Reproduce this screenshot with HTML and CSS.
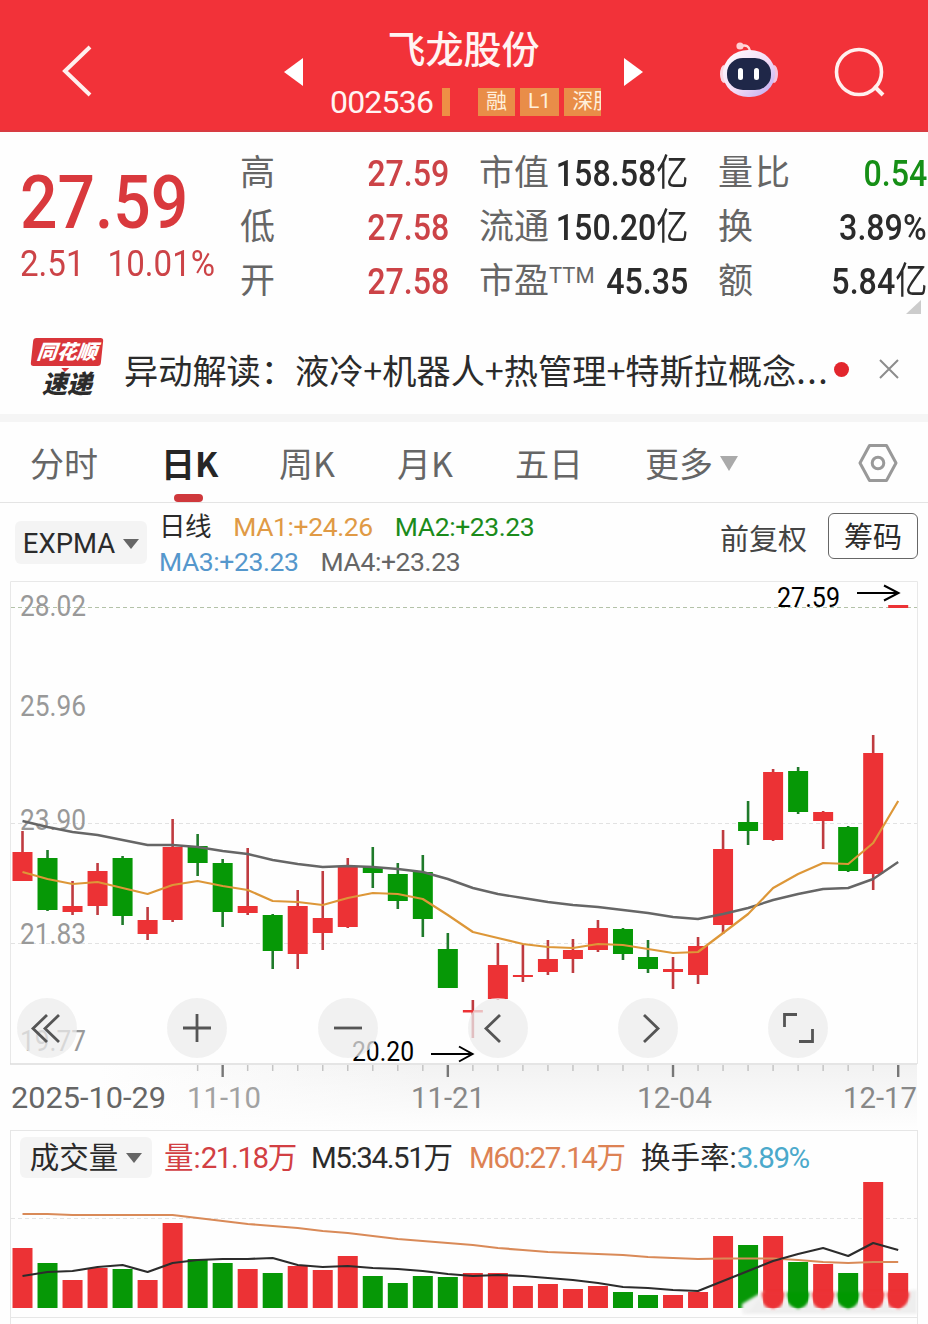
FILE: index.html
```html
<!DOCTYPE html>
<html lang="zh-CN">
  <head>
    <meta charset="UTF-8" />
    <meta name="viewport" content="width=device-width, initial-scale=1.0" />
    <title>飞龙股份 002536</title>
    <link rel="stylesheet" href="styles.css" />
  </head>
  <body>
    <header class="topbar">
      <svg class="back" width="34" height="54" viewBox="0 0 34 54">
        <path d="M30 3L5 27L30 51" fill="none" stroke="#fff0ee" stroke-width="4" />
      </svg>
      <svg class="prev" width="20" height="30" viewBox="0 0 20 30">
        <path d="M20 1V29L1 15Z" fill="#fff" />
      </svg>
      <div class="stock">
        <h1>飞龙股份</h1>
        <div class="stock-info">
          <span class="code">002536</span>
          <span class="tag-bar"></span>
          <div class="tags">
            <span class="tag">融</span>
            <span class="tag">L1</span>
            <span class="tag">深股</span>
          </div>
        </div>
      </div>
      <svg class="next" width="20" height="30" viewBox="0 0 20 30">
        <path d="M0 1V29L19 15Z" fill="#fff" />
      </svg>
      <svg class="robot" width="60" height="56" viewBox="0 0 60 56">
        <defs>
          <linearGradient id="shell" x1="0" y1="0" x2="1" y2="1">
            <stop offset="0" stop-color="#fff" />
            <stop offset="0.55" stop-color="#f3dcf6" />
            <stop offset="1" stop-color="#b9a6f2" />
          </linearGradient>
        </defs>
        <path d="M22 4Q30 2 31 9" fill="none" stroke="#ffd9dc" stroke-width="2.5" />
        <circle cx="21" cy="4" r="3.6" fill="#ffd0d4" />
        <ellipse cx="5" cy="32" rx="4" ry="9" fill="#fbd7e2" />
        <ellipse cx="55" cy="32" rx="4" ry="9" fill="#f6c4dd" />
        <rect x="4" y="8" width="52" height="47" rx="25" ry="23" fill="url(#shell)" />
        <rect x="8" y="16" width="44" height="32" rx="16" ry="15" fill="#1f2748" />
        <rect x="19" y="26" width="5" height="12" rx="2.5" fill="#fff" />
        <rect x="35" y="26" width="5" height="12" rx="2.5" fill="#fff" />
      </svg>
      <svg class="search" width="52" height="52" viewBox="0 0 52 52">
        <circle cx="25" cy="25" r="22.5" fill="none" stroke="#fff0ee" stroke-width="3.6" />
        <path d="M40 39L49 48" stroke="#fff0ee" stroke-width="4" />
      </svg>
    </header>

    <section class="quote">
      <div class="price">
        <div class="last">27.59</div>
        <div class="change"><span>2.51</span><span>10.01%</span></div>
      </div>
      <dl class="stats">
        <div><dt>高</dt><dd class="red">27.59</dd></div>
        <div><dt>市值</dt><dd>158.58<i>亿</i></dd></div>
        <div><dt class="wide">量比</dt><dd class="green">0.54</dd></div>
        <div><dt>低</dt><dd class="red">27.58</dd></div>
        <div><dt>流通</dt><dd>150.20<i>亿</i></dd></div>
        <div><dt>换</dt><dd>3.89%</dd></div>
        <div><dt>开</dt><dd class="red">27.58</dd></div>
        <div><dt>市盈<sup>TTM</sup></dt><dd>45.35</dd></div>
        <div><dt>额</dt><dd>5.84<i>亿</i></dd></div>
      </dl>
      <span class="corner"></span>
    </section>

    <section class="news">
      <div class="news-logo">
        <span class="logo-top">同花顺</span>
        <span class="logo-bottom">速递</span>
      </div>
      <p>异动解读：液冷+机器人+热管理+特斯拉概念<span class="dots">...</span></p>
      <span class="unread"></span>
      <svg class="close" width="22" height="22" viewBox="0 0 22 22">
        <path d="M2 2L20 20M20 2L2 20" stroke="#8c8c8c" stroke-width="2" />
      </svg>
    </section>

    <nav class="tabs">
      <a class="tab">分时</a>
      <a class="tab active">日K</a>
      <a class="tab">周K</a>
      <a class="tab">月K</a>
      <a class="tab">五日</a>
      <a class="tab more">更多<span class="caret light"></span></a>
      <svg class="settings" width="42" height="42" viewBox="0 0 42 42">
        <path d="M12.5 3.5H29.5L39 21L29.5 38.5H12.5L3 21Z" fill="none" stroke="#999" stroke-width="3" stroke-linejoin="round" />
        <circle cx="21" cy="21" r="5.8" fill="none" stroke="#999" stroke-width="3" />
      </svg>
    </nav>

    <section class="indicator">
      <button class="chip">EXPMA<span class="caret"></span></button>
      <div class="ma-list">
        <div><span class="period">日线</span><span class="ma1">MA1:+24.26</span><span class="ma2">MA2:+23.23</span></div>
        <div><span class="ma3">MA3:+23.23</span><span class="ma4">MA4:+23.23</span></div>
      </div>
      <span class="adjust">前复权</span>
      <button class="outline">筹码</button>
    </section>

    <section class="kline">
      <svg id="kline" width="928" height="549" viewBox="0 581 928 549"></svg>
      <div class="tools">
        <button><svg viewBox="0 0 60 60"><path d="M30 17L16 30.500L30 44M42 17L28 30.500L42 44" /></svg></button>
        <button><svg viewBox="0 0 60 60"><path d="M16 30H44M30 16V44" /></svg></button>
        <button><svg viewBox="0 0 60 60"><path d="M16 30H44" /></svg></button>
        <button><svg viewBox="0 0 60 60"><path d="M32 17L18 30.500L32 44" /></svg></button>
        <button><svg viewBox="0 0 60 60"><path d="M26 17L40 30.500L26 44" /></svg></button>
        <button><svg viewBox="0 0 60 60"><path d="M29 16.500H16.500V29M44.500 31V43.500H31" /></svg></button>
      </div>
    </section>

    <section class="volume">
      <div class="volume-head">
        <button class="chip">成交量<span class="caret"></span></button>
        <span class="vol">量:<b>21.18</b>万</span>
        <span class="m5"><b>M5:34.51</b>万</span>
        <span class="m60"><b>M60:27.14</b>万</span>
        <span class="rate">换手率:<b>3.89%</b></span>
      </div>
      <svg id="volume" width="928" height="144" viewBox="0 1180 928 144"></svg>
    </section>
    <script src="script.js"></script>
  </body>
</html>
```

FILE: styles.css
```css
* {
  box-sizing: border-box;
}

body {
  margin: 0;
  width: 928px;
  height: 1324px;
  overflow: hidden;
  background: #fefefe;
  color: #2b2b2b;
  font-family: Roboto, "Noto Sans CJK SC", sans-serif;
}

button {
  font: inherit;
  color: inherit;
  border: 0;
  padding: 0;
}

svg {
  display: block;
  flex: none;
}

/* header */
.topbar {
  height: 132px;
  background: #f23239;
  border-bottom: 2px solid #d83c42;
  display: flex;
  align-items: center;
  padding-left: 60px;
  padding-top: 12px;
}

.prev {
  margin-left: 189px;
  margin-top: 2px;
}

.stock {
  width: 271px;
  margin-left: 27px;
  margin-top: 9px;
  color: #fff4f2;
}

.stock h1 {
  margin: 0 4px 0 0;
  font-size: 38px;
  font-weight: 500;
  line-height: 52px;
  text-align: center;
}

.stock-info {
  display: flex;
  align-items: center;
  height: 51px;
}

.code {
  font-size: 32px;
  letter-spacing: -0.8px;
  width: 112px;
}

.tag-bar {
  width: 8px;
  height: 28px;
  background: #ee8f45;
}

.tags {
  display: flex;
  gap: 5px;
  width: 123px;
  margin-left: 28px;
  overflow: hidden;
}

.tag {
  flex: none;
  height: 28px;
  padding: 0 8px;
  line-height: 26px;
  font-size: 21px;
  background: #e98d48;
  color: #fff0dc;
}

.next {
  margin-left: 23px;
  margin-top: 2px;
}

.robot {
  margin-left: 75px;
  margin-top: -2px;
}

.search {
  margin-left: 55px;
  margin-top: 4px;
}

/* quote */
.quote {
  position: relative;
  display: flex;
  height: 203px;
  padding-top: 15px;
}

.price {
  width: 240px;
  padding-left: 20px;
  color: #d9393d;
}

.last {
  margin-top: 17px;
  font-size: 75px;
  font-weight: 500;
  line-height: 76px;
  transform: scaleX(0.88);
  transform-origin: left;
}

.change {
  display: flex;
  gap: 25px;
  font-size: 36px;
  line-height: 48px;
  color: #cc4347;
  transform: scaleX(0.92);
  transform-origin: left;
}

.stats {
  display: grid;
  grid-template-columns: 209px 209px 209px;
  grid-auto-rows: 54px;
  column-gap: 30px;
  margin: 0;
}

.stats div {
  display: flex;
  justify-content: space-between;
  line-height: 54px;
}

.stats dt {
  font-size: 35px;
  color: #666;
  white-space: nowrap;
}

.stats .wide {
  letter-spacing: 2px;
}

/* narrow digits, as in the quote board */
.stats dd {
  margin: 0 0 0 -24px;
  font-size: 37px;
  font-weight: 500;
  white-space: nowrap;
  transform: scaleX(0.87);
  transform-origin: right;
}

.stats i {
  font-style: normal;
  font-weight: 400;
  font-size: 37px;
}

.stats sup {
  font-size: 22px;
  line-height: 0;
  vertical-align: 10px;
}

.stats .red {
  color: #cc4347;
}

.stats .green {
  color: #168f16;
}

.corner {
  position: absolute;
  right: 7px;
  bottom: 21px;
  border-left: 15px solid transparent;
  border-bottom: 14px solid #ccc;
}

/* news */
.news {
  display: flex;
  align-items: center;
  height: 87px;
  padding: 0 0 11px 30px;
  border-bottom: 8px solid #f5f5f5;
}

.news-logo {
  width: 74px;
  height: 62px;
  margin-right: 20px;
  display: flex;
  flex-direction: column;
  align-items: center;
  font-style: italic;
  font-weight: 900;
}

.logo-top {
  position: relative;
  width: 70px;
  height: 30px;
  line-height: 28px;
  text-align: center;
  font-size: 20px;
  color: #fff;
  background: #d9353a;
  border-radius: 3px;
  transform: skewX(-6deg);
}

.logo-top::after {
  content: "";
  position: absolute;
  left: 31px;
  top: 30px;
  border: 4px solid transparent;
  border-top-color: #d9353a;
  border-bottom: 0;
}

.logo-bottom {
  margin-top: 3px;
  font-size: 25px;
  line-height: 32px;
}

.news p {
  margin: 0;
  width: 709px;
  font-family: "Noto Sans CJK SC", sans-serif;
  font-size: 34.2px;
  line-height: 50px;
  white-space: nowrap;
}

.dots {
  letter-spacing: 1.5px;
}

.unread {
  width: 15px;
  height: 15px;
  border-radius: 50%;
  background: #e2262d;
  margin-left: 1px;
}

.close {
  margin-left: 29px;
}

/* tabs */
.tabs {
  display: flex;
  height: 81px;
  padding-left: 30px;
  border-bottom: 1px solid #e4e4e4;
  font-family: "Noto Sans CJK SC", sans-serif;
  font-size: 34px;
  line-height: 82px;
  color: #666;
}

.tab {
  width: 118px;
  white-space: nowrap;
}

.tab:first-child {
  width: 131px;
}

.tab.active {
  position: relative;
  color: #262626;
  font-weight: 700;
}

.tab.active::after {
  content: "";
  position: absolute;
  left: 13px;
  bottom: 0;
  width: 29px;
  height: 8px;
  border-radius: 4px;
  background: #cf383c;
}

.tab:nth-child(5) {
  width: 130px;
}

.tab.more {
  width: 212px;
}

.settings {
  margin-top: 20px;
}

.caret {
  display: inline-block;
  border: 8px solid transparent;
  border-top: 10px solid #666;
  border-bottom: 0;
}

.caret.light {
  border-width: 15px 9px 0;
  border-top-color: #aaa;
  margin-left: 7px;
  vertical-align: 6px;
}

/* indicator row */
.indicator {
  display: flex;
  height: 78px;
  padding-left: 15px;
  align-items: flex-start;
}

.chip {
  display: flex;
  align-items: center;
  justify-content: center;
  gap: 8px;
  background: #f4f4f4;
  border-radius: 6px;
}

.indicator .chip {
  width: 132px;
  height: 43px;
  margin-top: 18px;
  padding-top: 2px;
  font-size: 27.5px;
}

.ma-list {
  width: 561px;
  margin: 6px 0 0 12px;
  font-size: 26.5px;
  line-height: 35px;
}

.ma-list span {
  margin-right: 22px;
  letter-spacing: -0.4px;
}

.ma1 {
  color: #e09a45;
}

.ma2 {
  color: #1b8b1b;
}

.ma3 {
  color: #5597cc;
}

.ma4 {
  color: #666;
}

.adjust {
  width: 108px;
  margin-top: 16px;
  font-size: 29px;
  line-height: 42px;
  color: #444;
}

.outline {
  width: 90px;
  height: 46px;
  margin-top: 10px;
  padding-top: 3px;
  font-size: 29px;
  line-height: 42px;
  background: none;
  border: 1px solid #666;
  border-radius: 6px;
}

/* charts */
.kline {
  position: relative;
  height: 549px;
}

.tools {
  position: absolute;
  left: 17px;
  top: 417px;
  display: flex;
  gap: 90.3px;
}

.tools button {
  width: 60px;
  height: 60px;
  border-radius: 50%;
  background: rgba(236, 236, 236, 0.75);
}

.tools path {
  fill: none;
  stroke: #555;
  stroke-width: 2.8;
}

.volume-head {
  display: flex;
  align-items: center;
  width: 908px;
  height: 50px;
  margin-left: 10px;
  padding: 6px 0 2px 9px;
  font-size: 29.5px;
  line-height: 40px;
  border: 1px solid #e6e6e6;
  border-bottom: 0;
}

.volume-head span {
  white-space: nowrap;
}

.volume-head b {
  font-weight: 400;
  letter-spacing: -1.4px;
}

.volume-head .chip {
  width: 132px;
  height: 41px;
}

.vol {
  width: 147px;
  margin-left: 12px;
  color: #d23f43;
}

.m5 {
  width: 158px;
}

.m60 {
  width: 172px;
  color: #dd8254;
}

.rate b {
  color: #4ba9cb;
}

.axis-label {
  font-size: 29px;
  fill: #999;
}

.date-label {
  font-size: 29px;
  fill: #888;
}

.mark {
  font-size: 28px;
  fill: #000;
}
```

FILE: script.js
```js
const RED = "#ec3235";
const GREEN = "#069806";
const STEP = 25.02;
const FIRST = 22.5;

// [direction, high, body top, body bottom, low]
const candles = [
  [1, 831, 852, 881, 881], [0, 850, 858, 910, 911], [1, 881, 906, 912, 915],
  [1, 863, 871, 906, 915], [0, 856, 858, 916, 925], [1, 907, 920, 934, 940],
  [1, 819, 847, 920, 922], [0, 834, 846, 863, 876], [0, 859, 863, 912, 927],
  [1, 848, 906, 913, 915], [0, 914, 915, 951, 969], [1, 890, 906, 954, 969],
  [1, 871, 918, 933, 950], [1, 858, 866, 927, 928], [0, 847, 867, 873, 888],
  [0, 863, 874, 901, 909], [0, 855, 872, 919, 937], [0, 933, 949, 988, 988],
  [1, 1000, 1010, 1012.5, 1038], [1, 943, 965, 999, 1000], [1, 945, 975, 977, 982],
  [1, 940, 959, 972, 975], [1, 939, 950, 959, 973], [1, 920, 928, 950, 952],
  [0, 928, 929, 954, 960], [0, 940, 957, 969, 973], [1, 957, 969, 972, 989],
  [1, 937, 946, 975, 984], [1, 830, 849, 925, 934], [0, 801, 822, 831, 845],
  [1, 769, 772, 840, 841], [0, 767, 771, 812, 814], [1, 811, 812, 821, 849],
  [0, 826, 827, 871, 872], [1, 735, 753, 874, 890], [1, 605, 605, 608, 608],
];

const ma1 = [872, 879, 884, 882, 888, 894, 885, 881, 886, 890, 901, 902, 905, 898, 893, 894, 899, 915,
  932, 938, 944, 947, 948, 944, 945, 949, 953, 952, 933, 914, 888, 874, 863, 864, 843, 801];
const ma2 = [821, 827, 832, 835, 840, 845, 845, 847, 851, 854, 860, 864, 867, 866, 867, 869, 872, 879,
  888, 894, 898, 902, 905, 907, 910, 913, 917, 919, 914, 908, 900, 894, 889, 888, 879, 862];

const volumes = [1248, 1263, 1280, 1268, 1269, 1280, 1223, 1259, 1263, 1269, 1273, 1266, 1270, 1256, 1276, 1283,
  1276, 1277, 1273, 1273, 1286, 1284, 1289, 1286, 1292, 1295, 1295, 1292, 1236, 1245, 1236, 1262, 1264, 1273, 1182, 1273];
const m5 = [1276, 1272, 1271, 1267, 1265, 1272, 1263, 1260, 1259, 1259, 1258, 1265, 1267, 1266, 1268, 1269, 1271, 1274,
  1276, 1275, 1276, 1278, 1280, 1283, 1287, 1288, 1290, 1291, 1281, 1271, 1261, 1254, 1248, 1256, 1243, 1250];
const m60 = [1214, 1214, 1215, 1215, 1215, 1215, 1215, 1218, 1221, 1224, 1226, 1228, 1231, 1233, 1236, 1239, 1241, 1243,
  1245, 1248, 1250, 1252, 1253, 1254, 1255, 1257, 1258, 1259, 1258.5, 1258.5, 1258.5, 1260, 1262, 1263, 1262, 1262];

const cx = (i) => FIRST + i * STEP;

function line(points, color, width) {
  const pts = points.map((y, i) => `${cx(i).toFixed(1)},${y}`).join(" ");
  return `<polyline points="${pts}" fill="none" stroke="${color}" stroke-width="${width}" stroke-linejoin="round"/>`;
}

function grid(y, color = "#e2e2e2") {
  return `<path d="M11 ${y + 0.5}H917" stroke="${color}" stroke-dasharray="4 3" stroke-width="1"/>`;
}

function label(cls, x, y, width, text, extra = "") {
  return `<text class="${cls}" x="${x}" y="${y}" textLength="${width}" lengthAdjust="spacingAndGlyphs" ${extra}>${text}</text>`;
}

function drawKline() {
  let out = `<defs>
    <linearGradient id="fade" x1="0" y1="0" x2="0" y2="1">
      <stop offset="0" stop-color="#fefefe" stop-opacity="0"/><stop offset="1" stop-color="#fefefe"/></linearGradient>
    <linearGradient id="side" x1="0" y1="0" x2="1" y2="0">
      <stop offset="0" stop-color="#fefefe"/><stop offset="0.4" stop-color="#f2f2f2"/></linearGradient>
  </defs>`;
  out += `<rect x="100" y="1065" width="817" height="64" fill="url(#side)"/>`;
  out += `<rect x="100" y="1065" width="818" height="65" fill="url(#fade)"/>`;
  out += `<path d="M10.5 1064V581.5H917.5V1064" fill="none" stroke="#e8e8e8"/>`;
  out += `<path d="M10 1064H917" stroke="#dcdcdc" stroke-width="1.5"/>`;
  out += grid(607, "#b3c2a8") + grid(823) + grid(943);

  [["28.02", 616], ["25.96", 716], ["23.90", 830], ["21.83", 944], ["19.77", 1051]].forEach(([text, y]) => {
    out += label("axis-label", 20, y, 66, text);
  });

  candles.forEach(([up, high, top, bottom, low], i) => {
    const color = up ? RED : GREEN;
    const x = cx(i);
    out += `<path d="M${x} ${high}V${low}" stroke="${up ? "#bf3b40" : "#1f7a2a"}" stroke-width="2.6"/>`;
    out += `<rect x="${x - 10}" y="${top}" width="20" height="${bottom - top}" fill="${color}"/>`;
  });
  out += line(ma2, "#666", 2.4) + line(ma1, "#dd9738", 2.2);

  // high / low marks
  out += label("mark", 777, 607, 63, "27.59") + label("mark", 352, 1061, 62, "20.20");
  out += `<path d="M857 593H898M884 585.5L898.5 593L884 600.5" fill="none" stroke="#000" stroke-width="2"/>`;
  out += `<path d="M431 1054H472M459 1046.5L472.5 1054L459 1061.5" fill="none" stroke="#000" stroke-width="2"/>`;

  for (let i = 7; i < 36; i++) {
    const major = (i - 8) % 9 === 0;
    out += `<path d="M${cx(i)} 1065V${major ? 1077 : 1071}" stroke="${major ? "#777" : "#c4c4c4"}" stroke-width="${major ? 2.4 : 1.5}"/>`;
  }
  out += label("date-label", 11, 1108, 155, "2025-10-29", 'style="fill:#666"');
  out += label("date-label", 187, 1108, 74, "11-10", 'style="fill:#a2a2a2"');
  out += label("date-label", 411, 1108, 74, "11-21");
  out += label("date-label", 637, 1108, 75, "12-04");
  out += label("date-label", 843, 1108, 74, "12-17");
  document.getElementById("kline").innerHTML = out;
}

function drawVolume() {
  let out = `<defs><filter id="soft" x="-20%" y="-50%" width="140%" height="200%"><feGaussianBlur stdDeviation="1.6"/></filter></defs>`;
  out += grid(1218, "#e4e4e4");
  volumes.forEach((y, i) => {
    out += `<rect x="${cx(i) - 10}" y="${y}" width="20" height="${1308 - y}" fill="${candles[i][0] ? RED : GREEN}"/>`;
  });
  out += line(m60, "#d98a58", 2.2) + line(m5, "#2c2c2c", 2.2);
  out += `<path d="M10.5 1324V1180M917.5 1324V1180M10 1317.5H917" stroke="#e6e6e6" fill="none"/>`;

  // smudge over the feet of the last bars
  out += `<g filter="url(#soft)"><path d="M742 1313V1304L764 1291L759 1312Z" fill="#f2f2f2"/>
    <path d="M742 1314H917V1290H911L906 1304L898 1310L890 1307L885 1299L880 1307L873 1310L866 1307L860 1299L855 1306L848 1309L841 1306L835 1299L830 1307L823 1310L816 1307L810 1299L805 1306L798 1309L791 1306L785 1299L780 1307L773 1310L766 1307L759 1298L752 1309Z" fill="#eee"/></g>`;
  for (let i = 30; i < 36; i++) {
    const x = cx(i);
    out += `<path d="M${x - 11} 1292H${x + 11}Q${x + 12} 1302 ${x} 1309Q${x - 12} 1302 ${x - 11} 1292Z" fill="${candles[i][0] ? RED : GREEN}" filter="url(#soft)"/>`;
  }
  document.getElementById("volume").innerHTML = out;
}

drawKline();
drawVolume();
```
